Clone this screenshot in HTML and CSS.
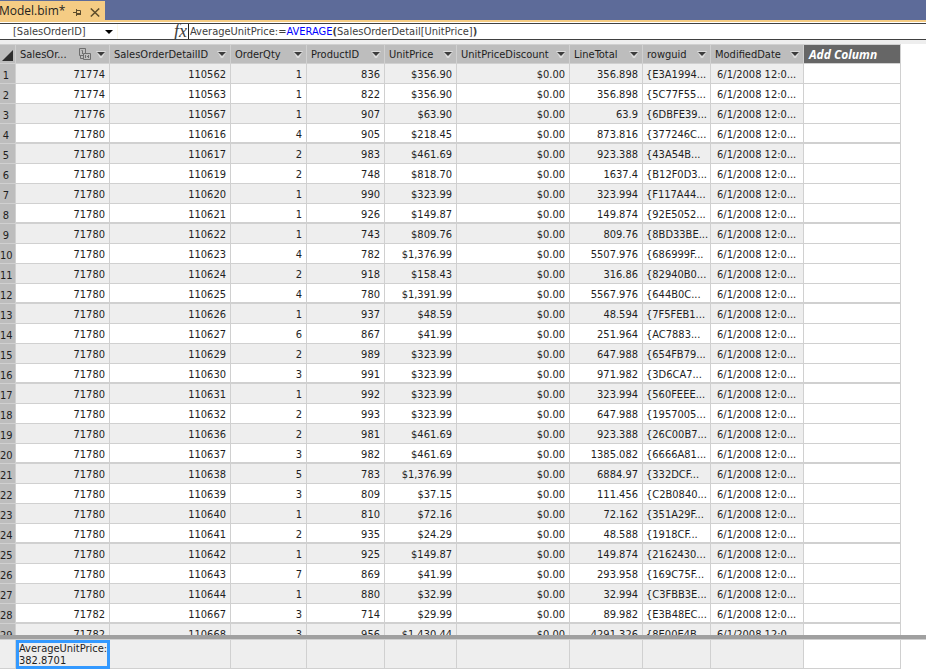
FILE: index.html
```html
<!DOCTYPE html>
<html lang="en">
<head>
    <meta charset="UTF-8">
    <meta name="viewport" content="width=device-width, initial-scale=1.0">
    <title>Model.bim</title>
    <link rel="stylesheet" href="styles.css">
</head>
<body>
    <div class="tab-bar">
        <div class="tab">
            <span class="tab-title">Model.bim*</span>
            <button class="tab-button" aria-label="Pin tab">
                <svg width="9" height="9" viewBox="0 0 9 9"><path d="M0 4.5H3M3.5 1V8M3.5 2.5H7.5V6M3.5 5.5H8M3.5 6.5H8" fill="none" stroke="#5f4d2b"/></svg>
            </button>
            <button class="tab-button" aria-label="Close tab">
                <svg width="10" height="9" viewBox="0 0 10 9"><path d="M0.8 0.5L9.2 8.5M9.2 0.5L0.8 8.5" fill="none" stroke="#5f4d2b" stroke-width="1.5"/></svg>
            </button>
        </div>
    </div>

    <div class="formula-bar">
        <div class="name-box">
            <select class="name-select" aria-label="Column">
                <option>[SalesOrderID]</option>
            </select>
            <svg class="name-arrow" width="8" height="4" viewBox="0 0 8 4"><path d="M0 0H8L4 4Z"/></svg>
        </div>
        <span class="fx">fx</span>
        <div class="formula" role="textbox" aria-label="Formula" contenteditable="true" spellcheck="false">AverageUnitPrice:=<span class="fn">AVERAGE</span><span class="paren">(</span>SalesOrderDetail[UnitPrice]<span class="paren">)</span></div>
    </div>

    <div class="grid">
        <table class="data">
            <colgroup class="columns"></colgroup>
            <thead>
                <tr id="head"></tr>
            </thead>
            <tbody id="rows"></tbody>
        </table>
    </div>

    <div class="measures">
        <table class="data">
            <colgroup class="columns"></colgroup>
            <tbody>
                <tr class="measure-row" id="measures">
                    <td></td>
                    <td class="selected"><div class="measure">AverageUnitPrice: 382.8701</div></td>
                </tr>
            </tbody>
        </table>
    </div>

    <script>
        const columns = [
            ["SalesOr...", 94], ["SalesOrderDetailID", 121], ["OrderQty", 76], ["ProductID", 78],
            ["UnitPrice", 72], ["UnitPriceDiscount", 113], ["LineTotal", 73], ["rowguid", 68],
            ["ModifiedDate", 93]
        ];

        // order, detail, qty, product, price, line total, guid
        const data = [
            [71774, 110562, 1, 836, "$356.90", "356.898", "{E3A1994..."],
            [71774, 110563, 1, 822, "$356.90", "356.898", "{5C77F55..."],
            [71776, 110567, 1, 907, "$63.90", "63.9", "{6DBFE39..."],
            [71780, 110616, 4, 905, "$218.45", "873.816", "{377246C..."],
            [71780, 110617, 2, 983, "$461.69", "923.388", "{43A54B..."],
            [71780, 110619, 2, 748, "$818.70", "1637.4", "{B12F0D3..."],
            [71780, 110620, 1, 990, "$323.99", "323.994", "{F117A44..."],
            [71780, 110621, 1, 926, "$149.87", "149.874", "{92E5052..."],
            [71780, 110622, 1, 743, "$809.76", "809.76", "{8BD33BE..."],
            [71780, 110623, 4, 782, "$1,376.99", "5507.976", "{686999F..."],
            [71780, 110624, 2, 918, "$158.43", "316.86", "{82940B0..."],
            [71780, 110625, 4, 780, "$1,391.99", "5567.976", "{644B0C..."],
            [71780, 110626, 1, 937, "$48.59", "48.594", "{7F5FEB1..."],
            [71780, 110627, 6, 867, "$41.99", "251.964", "{AC7883..."],
            [71780, 110629, 2, 989, "$323.99", "647.988", "{654FB79..."],
            [71780, 110630, 3, 991, "$323.99", "971.982", "{3D6CA7..."],
            [71780, 110631, 1, 992, "$323.99", "323.994", "{560FEEE..."],
            [71780, 110632, 2, 993, "$323.99", "647.988", "{1957005..."],
            [71780, 110636, 2, 981, "$461.69", "923.388", "{26C00B7..."],
            [71780, 110637, 3, 982, "$461.69", "1385.082", "{6666A81..."],
            [71780, 110638, 5, 783, "$1,376.99", "6884.97", "{332DCF..."],
            [71780, 110639, 3, 809, "$37.15", "111.456", "{C2B0840..."],
            [71780, 110640, 1, 810, "$72.16", "72.162", "{351A29F..."],
            [71780, 110641, 2, 935, "$24.29", "48.588", "{1918CF..."],
            [71780, 110642, 1, 925, "$149.87", "149.874", "{2162430..."],
            [71780, 110643, 7, 869, "$41.99", "293.958", "{169C75F..."],
            [71780, 110644, 1, 880, "$32.99", "32.994", "{C3FBB3E..."],
            [71782, 110667, 3, 714, "$29.99", "89.982", "{E3B48EC..."],
            [71782, 110668, 3, 956, "$1,430.44", "4291.326", "{8E00E4B..."]
        ];

        const relation = '<svg class="relation" width="12" height="12" viewBox="0 0 12 12"><path d="M4 7.5H0.5V0.5H6.5V5M2.5 2.5H3.5V6M1.5 8V10.5H4M4.5 5.5H11.5V11.5H4.5ZM6.5 7V10M8 8.5H10M9.5 7V10" fill="none" stroke="#6e6e6e"/></svg>';
        const arrow = '<svg width="10" height="8" viewBox="0 0 10 8"><path d="M0 0H10L6 7H4Z" fill="#dcdcdc"/><path d="M1 1H9L5 5Z" fill="#3c3c3c"/></svg>';

        const widths = [16, ...columns.map(c => c[1]), 97];
        document.querySelectorAll(".columns").forEach(group => {
            group.innerHTML = widths.map(w => `<col style="width: ${w}px">`).join("");
        });

        document.getElementById("head").innerHTML =
            '<th class="corner"><svg width="11" height="11" viewBox="0 0 11 11"><path d="M11 0V11H0Z" fill="#2d2d2d"/></svg></th>' +
            columns.map(([name], i) => `<th scope="col"><div class="head-cell"><span class="head-name">${name}</span>${i === 0 ? relation : ""}<button class="filter" aria-label="Filter ${name}">${arrow}</button></div></th>`).join("") +
            '<th class="add-column" scope="col">Add Column</th>';

        document.getElementById("rows").innerHTML = data.map((r, i) => {
            const cells = [r[0], r[1], r[2], r[3], r[4], "$0.00", r[5]];
            return `<tr><th class="row-number" scope="row">${i + 1}</th>` +
                cells.map(c => `<td class="number">${c}</td>`).join("") +
                `<td class="guid">${r[6]}</td><td class="date">6/1/2008 12:0...</td><td class="empty"></td></tr>`;
        }).join("");

        document.getElementById("measures").innerHTML += "<td></td>".repeat(8) + '<td class="empty"></td>';
    </script>
</body>
</html>
```
FILE: styles.css
```css
* {
    box-sizing: border-box;
}

body {
    margin: 0;
    height: 100vh;
    display: flex;
    flex-direction: column;
    overflow: hidden;
    background-color: #ffffff;
    color: #1e1e1e;
    font-family: "DejaVu Sans Condensed", "DejaVu Sans", Tahoma, sans-serif;
    font-size: 11px;
}

button {
    padding: 0;
    border: none;
    background: none;
    display: flex;
    cursor: pointer;
}

.tab-bar {
    flex: none;
    display: flex;
    height: 22px;
    padding-top: 1px;
    background-color: #5d6b99;
    border-bottom: 2px solid #f5cc84;
}

.tab {
    display: flex;
    align-items: center;
    gap: 8px;
    margin-left: -1px;
    padding-right: 5px;
    background-color: #f5cc84;
    font-family: "Open Sans", "Segoe UI", sans-serif;
    font-size: 12px;
    line-height: 16px;
}

.tab-button {
    padding-top: 3px;
}

.formula-bar {
    flex: none;
    display: flex;
    height: 17px;
    margin-top: 1px;
    border-top: 1px solid #404040;
    border-bottom: 1px solid #404040;
}

.name-box {
    display: flex;
    align-items: center;
    width: 118px;
    padding-left: 13px;
    border-right: 1px solid #fbf7e8;
}

.name-select {
    flex: 1;
    padding: 0;
    border: none;
    background: none;
    appearance: none;
    font: inherit;
    color: #404040;
}

.name-arrow {
    margin-right: 4px;
    pointer-events: none;
}

.fx {
    width: 70px;
    padding-right: 1px;
    text-align: right;
    font-family: "Liberation Serif", serif;
    font-style: italic;
    font-size: 18px;
    line-height: 15px;
    color: #404040;
}

.formula {
    flex: 1;
    padding: 1px 0 0 1px;
    border-left: 1px solid #202020;
    line-height: 14px;
    white-space: nowrap;
    color: #404040;
    outline: none;
}

.fn {
    color: #0000ff;
}

.paren {
    font-weight: bold;
}

.grid {
    flex: 1;
    min-height: 0;
    overflow: hidden;
    border-top: 4px solid #eeeeee;
    border-bottom: 4px solid #a0a0a0;
}

.data {
    table-layout: fixed;
    width: 901px;
    border-collapse: separate;
    border-spacing: 0;
}

.data th,
.data td {
    height: 20px;
    padding: 4px 4px 0;
    border-right: 1px solid #d0d0d0;
    border-bottom: 1px solid #d0d0d0;
    overflow: hidden;
    line-height: 14px;
    font-weight: normal;
    text-align: left;
    vertical-align: top;
    white-space: nowrap;
}

.data thead th {
    padding-top: 3px;
    padding-right: 3px;
    border-top: 1px solid #d0d0d0;
    background-color: #bdbdbd;
}

.data thead .corner {
    padding: 5px 0 0 2px;
    line-height: 0;
}

.head-cell {
    display: flex;
    align-items: center;
}

.head-name {
    flex: 1;
}

.relation {
    align-self: flex-start;
    margin-right: 5px;
}

.data thead .add-column {
    padding-left: 5px;
    background-color: #666666;
    color: #ffffff;
    font-family: "Open Sans", "Segoe UI", sans-serif;
    font-size: 12px;
    font-weight: bold;
    font-style: italic;
}

.data tbody tr:nth-child(odd) td {
    background-color: #eeeeee;
}

.data tbody tr .empty.empty {
    background-color: #ffffff;
}

.data tbody tr:nth-child(4n) td {
    border-bottom-width: 2px;
}

.data .row-number {
    padding: 5px 3px 0 0;
    background-color: #bdbdbd;
    text-align: center;
}

.data .number {
    text-align: right;
}

.data .guid {
    padding-left: 3px;
    padding-right: 0;
}

.data .date {
    padding-left: 6px;
    padding-right: 0;
}

.measures {
    flex: none;
    height: 31px;
    overflow: hidden;
    border-top: 1px solid #d0d0d0;
}

.data .measure-row td {
    height: 29px;
    background-color: #eeeeee;
}

.data .measure-row .selected {
    padding: 0;
    border: none;
}

.measure {
    height: 29px;
    border: 3px solid #3399ff;
    line-height: 12px;
    white-space: normal;
}
```
